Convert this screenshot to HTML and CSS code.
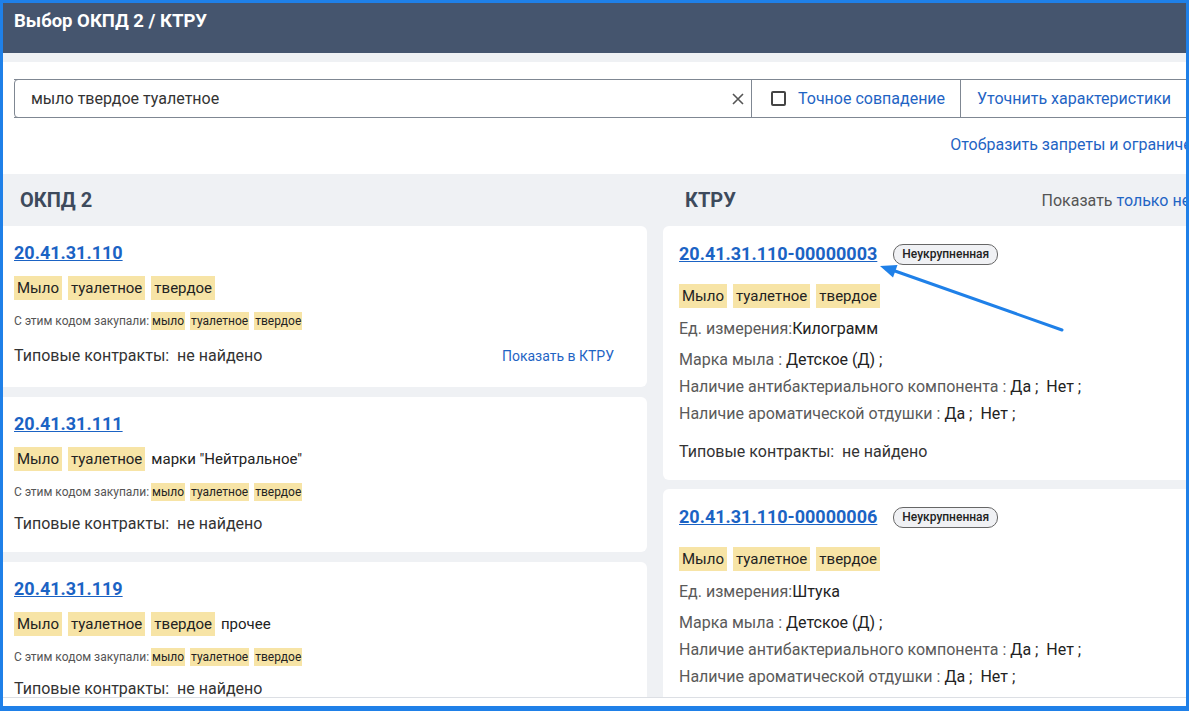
FILE: index.html
```html
<!DOCTYPE html>
<html lang="ru">
<head>
    <meta charset="UTF-8">
    <meta name="viewport" content="width=device-width, initial-scale=1.0">
    <title>Выбор ОКПД 2 / КТРУ</title>
    <link rel="stylesheet" href="styles.css">
</head>
<body>

<div class="frame">
    <div class="modal">
        <div class="modal-header">Выбор ОКПД 2 / КТРУ</div>
        <div class="modal-gap"></div>

        <div class="search-block">
            <div class="search-row">
                <div class="search-input">
                    <span class="search-text">мыло твердое туалетное</span>
                    <svg class="clear" width="14" height="14" viewBox="0 0 14 14">
                        <path d="M2 2 L12 12 M12 2 L2 12" stroke="#555" stroke-width="1.6" fill="none"/>
                    </svg>
                </div>
                <label class="exact"><span class="checkbox"></span>Точное совпадение</label>
                <div class="refine">Уточнить характеристики</div>
                <div class="refine">Найти</div>
            </div>
            <div class="limits"><a href="#">Отобразить запреты и ограничения</a></div>
        </div>

        <div class="panel">
            <div class="column">
                <div class="col-head"><h2>ОКПД 2</h2></div>

                <div class="card">
                    <a class="code" href="#">20.41.31.110</a>
                    <div class="words">
                        <span class="hl">Мыло</span><span class="hl">туалетное</span><span class="hl">твердое</span>
                    </div>
                    <div class="bought">
                        <span class="bought-label">С этим кодом закупали:</span><span class="hl">мыло</span><span class="hl">туалетное</span><span class="hl">твердое</span>
                    </div>
                    <div class="contracts">
                        <span>Типовые контракты:&nbsp; не найдено</span>
                        <a class="show-ktru" href="#">Показать в КТРУ</a>
                    </div>
                </div>

                <div class="card">
                    <a class="code" href="#">20.41.31.111</a>
                    <div class="words">
                        <span class="hl">Мыло</span><span class="hl">туалетное</span><span>марки "Нейтральное"</span>
                    </div>
                    <div class="bought">
                        <span class="bought-label">С этим кодом закупали:</span><span class="hl">мыло</span><span class="hl">туалетное</span><span class="hl">твердое</span>
                    </div>
                    <div class="contracts">
                        <span>Типовые контракты:&nbsp; не найдено</span>
                    </div>
                </div>

                <div class="card">
                    <a class="code" href="#">20.41.31.119</a>
                    <div class="words">
                        <span class="hl">Мыло</span><span class="hl">туалетное</span><span class="hl">твердое</span><span>прочее</span>
                    </div>
                    <div class="bought">
                        <span class="bought-label">С этим кодом закупали:</span><span class="hl">мыло</span><span class="hl">туалетное</span><span class="hl">твердое</span>
                    </div>
                    <div class="contracts">
                        <span>Типовые контракты:&nbsp; не найдено</span>
                    </div>
                </div>
            </div>

            <div class="column">
                <div class="col-head ktru-head">
                    <h2>КТРУ</h2>
                    <div class="only">Показать <a href="#">только неукрупненные</a></div>
                </div>

                <div class="card ktru">
                    <div class="code-row">
                        <a class="code" href="#">20.41.31.110-00000003</a>
                        <span class="badge">Неукрупненная</span>
                    </div>
                    <div class="words">
                        <span class="hl">Мыло</span><span class="hl">туалетное</span><span class="hl">твердое</span>
                    </div>
                    <div class="unit"><span class="label">Ед. измерения:</span>Килограмм</div>
                    <div class="props">
                        <div><span class="label">Марка мыла :</span> Детское (Д) ;</div>
                        <div><span class="label">Наличие антибактериального компонента :</span> Да ;&nbsp; Нет ;</div>
                        <div><span class="label">Наличие ароматической отдушки :</span> Да ;&nbsp; Нет ;</div>
                    </div>
                    <div class="ktru-contracts">Типовые контракты:&nbsp; не найдено</div>
                </div>

                <div class="card ktru">
                    <div class="code-row">
                        <a class="code" href="#">20.41.31.110-00000006</a>
                        <span class="badge">Неукрупненная</span>
                    </div>
                    <div class="words">
                        <span class="hl">Мыло</span><span class="hl">туалетное</span><span class="hl">твердое</span>
                    </div>
                    <div class="unit"><span class="label">Ед. измерения:</span>Штука</div>
                    <div class="props">
                        <div><span class="label">Марка мыла :</span> Детское (Д) ;</div>
                        <div><span class="label">Наличие антибактериального компонента :</span> Да ;&nbsp; Нет ;</div>
                        <div><span class="label">Наличие ароматической отдушки :</span> Да ;&nbsp; Нет ;</div>
                    </div>
                    <div class="ktru-contracts">Типовые контракты:&nbsp; не найдено</div>
                </div>
            </div>
        </div>

        <div class="modal-footer"></div>
    </div>

    <!-- annotation arrow -->
    <svg class="arrow" width="1189" height="711" viewBox="0 0 1189 711">
        <line x1="1062" y1="330" x2="895" y2="271" stroke="#1f80e8" stroke-width="3" stroke-linecap="round"/>
        <polygon points="880,266 897.5,265 893,277.5" fill="#1f80e8"/>
    </svg>
</div>

</body>
</html>
```

FILE: styles.css
```css
body {
    margin: 0;
    overflow: hidden;
    font-family: Roboto, "Liberation Sans", sans-serif;
    color: #222;
    background-color: #fff;
}
a {
    color: #1f64c4;
    text-decoration: none;
}
.frame {
    position: relative;
    width: 1189px;
    height: 711px;
    box-sizing: border-box;
    border: 3px solid #1f80e8;
    border-bottom-width: 5px;
    overflow: hidden;
}
.modal {
    width: 1330px;
    margin-left: -6px;
}
.modal-header {
    height: 50px;
    box-sizing: border-box;
    padding: 5px 0 0 17px;
    background-color: #45556e;
    color: #fff;
    font-size: 18.5px;
    font-weight: 700;
    line-height: 26px;
}
.modal-gap {
    height: 9px;
    background-color: #eff1f4;
}

/* search */
.search-block {
    height: 112px;
    box-sizing: border-box;
    padding: 17px 0 0 17px;
    background-color: #fff;
}
.search-row {
    display: flex;
    height: 39px;
    box-sizing: border-box;
    border-top: 1px solid #7f8792;
    border-bottom: 1px solid #7f8792;
    font-size: 16px;
}
.search-input {
    width: 738px;
    box-sizing: border-box;
    display: flex;
    align-items: center;
    justify-content: space-between;
    padding: 0 6px 0 16px;
    margin-top: -1px;
    margin-bottom: -1px;
    border: 1px solid #7f8792;
    border-radius: 4px 0 0 4px;
}
.search-text {
    color: #333;
}
.exact {
    width: 209px;
    box-sizing: border-box;
    display: flex;
    align-items: center;
    gap: 12px;
    padding-left: 19px;
    color: #1f64c4;
    border-right: 1px solid #7f8792;
}
.checkbox {
    width: 11px;
    height: 11px;
    border: 2px solid #444;
    border-radius: 2px;
}
.refine {
    display: flex;
    align-items: center;
    padding: 0 16px;
    color: #1f64c4;
    border-right: 1px solid #7f8792;
}
.limits {
    margin-top: 16px;
    padding-right: 108px;
    text-align: right;
    font-size: 16px;
    line-height: 22px;
}

/* results */
.panel {
    height: 523px;
    overflow: hidden;
    display: grid;
    grid-template-columns: 650px 650px;
    gap: 16px;
    background-color: #eff1f4;
}
.col-head {
    height: 52px;
    display: flex;
    align-items: center;
    justify-content: space-between;
    padding: 0 24px 0 23px;
}
.ktru-head {
    padding-left: 22px;
}
.col-head h2 {
    margin: 0;
    font-size: 20px;
    color: #3d4a5c;
}
.only {
    font-size: 16px;
    color: #555;
}
.card {
    background-color: #fff;
    border-radius: 6px;
    padding: 16px 17px 17px;
    margin-bottom: 10px;
    font-size: 16px;
}
.code {
    font-size: 18px;
    font-weight: 700;
    line-height: 22px;
    color: #1b63c4;
    text-decoration: underline;
}
.words {
    display: flex;
    align-items: center;
    gap: 6px;
    margin-top: 12px;
    font-size: 15px;
    line-height: 24px;
}
.hl {
    background-color: #f7e4a6;
    padding: 0 3px;
    color: #222;
}
.bought {
    display: flex;
    align-items: center;
    gap: 5px;
    margin-top: 12px;
    font-size: 12px;
    line-height: 18px;
}
.bought-label {
    color: #555;
    margin-right: -3px;
}
.bought .hl {
    padding: 0 1px;
}
.contracts {
    display: flex;
    align-items: center;
    justify-content: space-between;
    margin-top: 12px;
    line-height: 22px;
    color: #333;
}
.show-ktru {
    font-size: 14px;
    padding: 3px 16px 3px 0;
}

/* ktru cards */
.ktru {
    padding: 17px 16px 17px;
    margin-bottom: 9px;
}
.code-row {
    display: flex;
    align-items: center;
    gap: 16px;
}
.badge {
    font-size: 12px;
    font-weight: 500;
    line-height: 19px;
    padding: 0 8px;
    border: 1px solid #666;
    border-radius: 10px;
    background-color: #f0f1f4;
    color: #222;
}
.ktru .words {
    margin-top: 19px;
}
.unit {
    margin-top: 8px;
    line-height: 26px;
}
.props {
    margin-top: 4px;
    line-height: 27px;
}
.label {
    color: #5a5a5a;
}
.ktru-contracts {
    margin-top: 14px;
    line-height: 22px;
    color: #333;
}
.modal-footer {
    height: 40px;
    border-top: 1px solid #dcdfe4;
    background-color: #fff;
}

.arrow {
    position: absolute;
    left: -3px;
    top: -3px;
    pointer-events: none;
}
```
